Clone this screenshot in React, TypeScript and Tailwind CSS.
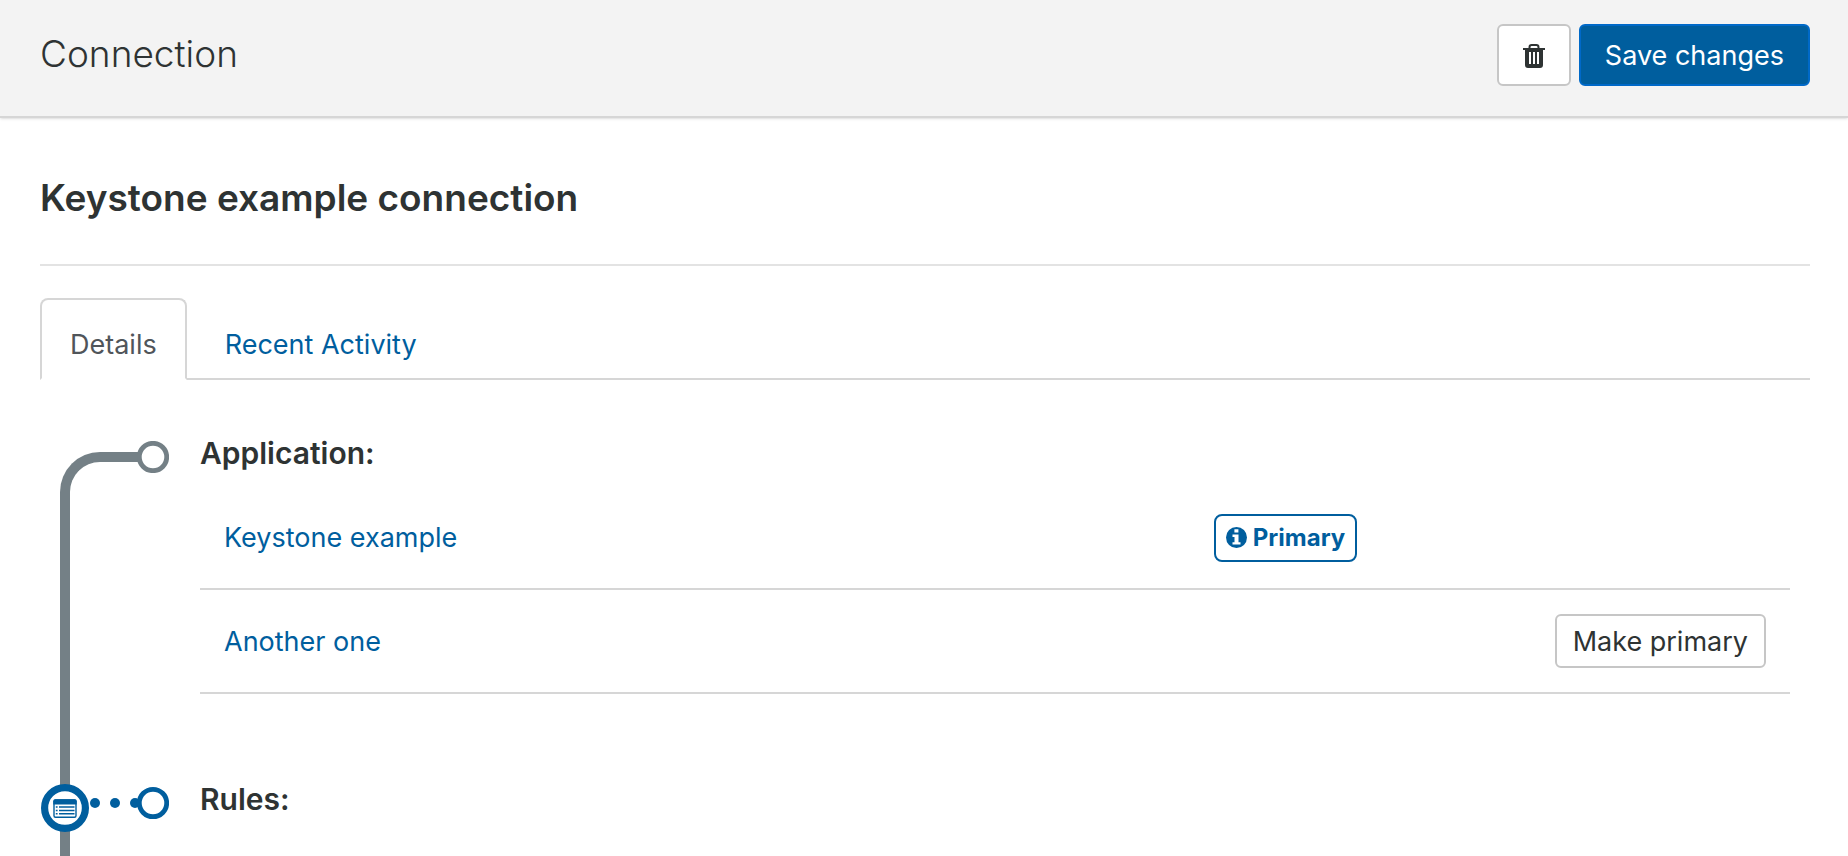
import { useState } from "react";

interface Application {
  id: string;
  name: string;
}

const APPLICATIONS: Application[] = [
  { id: "keystone", name: "Keystone example" },
  { id: "another", name: "Another one" },
];

const TABS = ["Details", "Recent Activity"];

function TrashIcon() {
  return (
    <svg width="22" height="24" viewBox="0 0 22 24" fill="none" aria-hidden="true">
      <path d="M6.5 5V3.2Q6.5 1 8.7 1h4.6q2.2 0 2.2 2.2V5" stroke="#2e3333" strokeWidth="2" />
      <path
        fill="#2e3333"
        fillRule="evenodd"
        d="M0 4h22v2h-2v15a3 3 0 0 1-3 3H5a3 3 0 0 1-3-3V6H0zM6 8v12h2V8zM10 8v12h2V8zM14 8v12h2V8z"
      />
    </svg>
  );
}

function InfoIcon() {
  return (
    <svg width="21" height="21" viewBox="0 0 21 21" fill="none" aria-hidden="true">
      <circle cx="10.5" cy="10.5" r="10.5" fill="#005e9e" />
      <path d="M8.4 2.2h4v3.4h-4zM6.5 7.6h6v7.6h2v2.4h-8v-2.4h2V10h-2z" fill="#fff" />
    </svg>
  );
}

function EndPoint() {
  return (
    <svg width="32" height="32" viewBox="0 0 32 32" fill="none" aria-hidden="true">
      <circle cx="16" cy="16" r="13.7" fill="#fff" stroke="#748086" strokeWidth="4.8" />
    </svg>
  );
}

function RuleNode() {
  return (
    <svg width="128" height="48" viewBox="0 0 128 48" fill="none" aria-hidden="true">
      <circle cx="24" cy="24" r="20.4" fill="#fff" stroke="#005e9e" strokeWidth="7.2" />
      <rect x="13" y="16" width="22" height="17.3" rx="1.5" stroke="#005e9e" strokeWidth="1.4" />
      <path d="M12.3 20.5v-3.2q0-2 2-2h19.4q2 0 2 2v3.2z" fill="#005e9e" />
      <path
        d="M14.8 23h1.8M14.8 26.4h1.8M14.8 29.8h1.8M18 23h15.5M18 26.4h15.5M18 29.8h15.5"
        stroke="#005e9e"
        strokeWidth="1.5"
      />
      <circle cx="54" cy="19" r="5" fill="#005e9e" />
      <circle cx="74" cy="19" r="5" fill="#005e9e" />
      <circle cx="94" cy="19" r="5" fill="#005e9e" />
      <circle cx="112" cy="19" r="13.7" fill="#fff" stroke="#005e9e" strokeWidth="4.8" />
    </svg>
  );
}

export default function App() {
  const [activeTab, setActiveTab] = useState("Details");
  const [primaryId, setPrimaryId] = useState("keystone");

  return (
    <div className="flex min-h-screen flex-col bg-white font-['Inter','Liberation_Sans',sans-serif] text-[27px] leading-10 text-[#2e3333]">
      {/* Header */}
      <header className="flex items-start justify-between border-b-2 border-[#d6d6d6] bg-[#f3f3f3] pt-6 pr-[38px] pb-[30px] pl-10 shadow-sm">
        <h1 className="text-[37px] leading-[60px] font-light">Connection</h1>
        <div className="flex gap-2">
          <button
            type="button"
            aria-label="Delete connection"
            className="flex h-[62px] w-[74px] items-center justify-center rounded-md border-2 border-[#c6c6c6] bg-white pt-0.5"
          >
            <TrashIcon />
          </button>
          <button
            type="button"
            className="h-[62px] rounded-md border-2 border-[#0069c8] bg-[#005e9e] px-6 pt-0.5 text-white"
          >
            Save changes
          </button>
        </div>
      </header>

      <main className="flex flex-1 flex-col pr-[38px] pl-10">
        <h2 className="border-b-2 border-[#e3e3e3] pt-[50px] pb-[36px] text-[37px] leading-[60px] font-semibold">
          Keystone example connection
        </h2>

        {/* Tabs */}
        <nav className="mt-8 flex gap-2 border-b-2 border-[#d6d6d6]">
          {TABS.map((tab) => (
            <button
              key={tab}
              type="button"
              onClick={() => setActiveTab(tab)}
              className={`-mb-0.5 h-[82px] rounded-t-lg border-2 px-7 pt-3 ${
                activeTab === tab
                  ? "border-[#d6d6d6] border-b-white bg-white text-[#50555a]"
                  : "border-transparent text-[#005e9e]"
              }`}
            >
              {tab}
            </button>
          ))}
        </nav>

        {/* Application */}
        <section className="mt-[53px] flex">
          <div className="relative flex w-40 shrink-0 flex-col">
            <div className="mt-[19px] ml-5 w-20 flex-1 rounded-tl-[40px] border-t-10 border-l-10 border-[#748086]" />
            <div className="absolute top-2 left-[97px]">
              <EndPoint />
            </div>
          </div>
          <div className="flex-1 pr-5 pb-[85px]">
            <h3 className="text-[30px] leading-10 font-semibold">Application:</h3>
            <table className="mt-3 w-full table-fixed">
              <tbody>
                {APPLICATIONS.map((app) => (
                  <tr key={app.id} className="h-[104px] border-b-2 border-[#d6d6d6]">
                    <td className="w-[62%] px-6 pt-0.5">
                      <a href="#" className="text-[#005e9e]">
                        {app.name}
                      </a>
                    </td>
                    <td className="px-7 pt-0.5">
                      {app.id === primaryId && (
                        <span className="inline-flex h-12 items-center gap-1.5 rounded-lg border-2 border-[#005e9e] px-2.5 align-middle text-2xl font-bold text-[#005e9e]">
                          <InfoIcon />
                          Primary
                        </span>
                      )}
                    </td>
                    <td className="px-6 text-right">
                      {app.id !== primaryId && (
                        <button
                          type="button"
                          onClick={() => setPrimaryId(app.id)}
                          className="h-[54px] rounded-md border-2 border-[#c6c6c6] bg-white px-4 pt-0.5 align-middle whitespace-nowrap"
                        >
                          Make primary
                        </button>
                      )}
                    </td>
                  </tr>
                ))}
              </tbody>
            </table>
          </div>
        </section>

        {/* Rules */}
        <section className="flex flex-1">
          <div className="relative flex w-40 shrink-0 flex-col">
            <div className="ml-5 w-2.5 flex-1 bg-[#748086]" />
            <div className="absolute top-[5px] left-px">
              <RuleNode />
            </div>
          </div>
          <h3 className="text-[30px] leading-10 font-semibold">Rules:</h3>
        </section>
      </main>
    </div>
  );
}
